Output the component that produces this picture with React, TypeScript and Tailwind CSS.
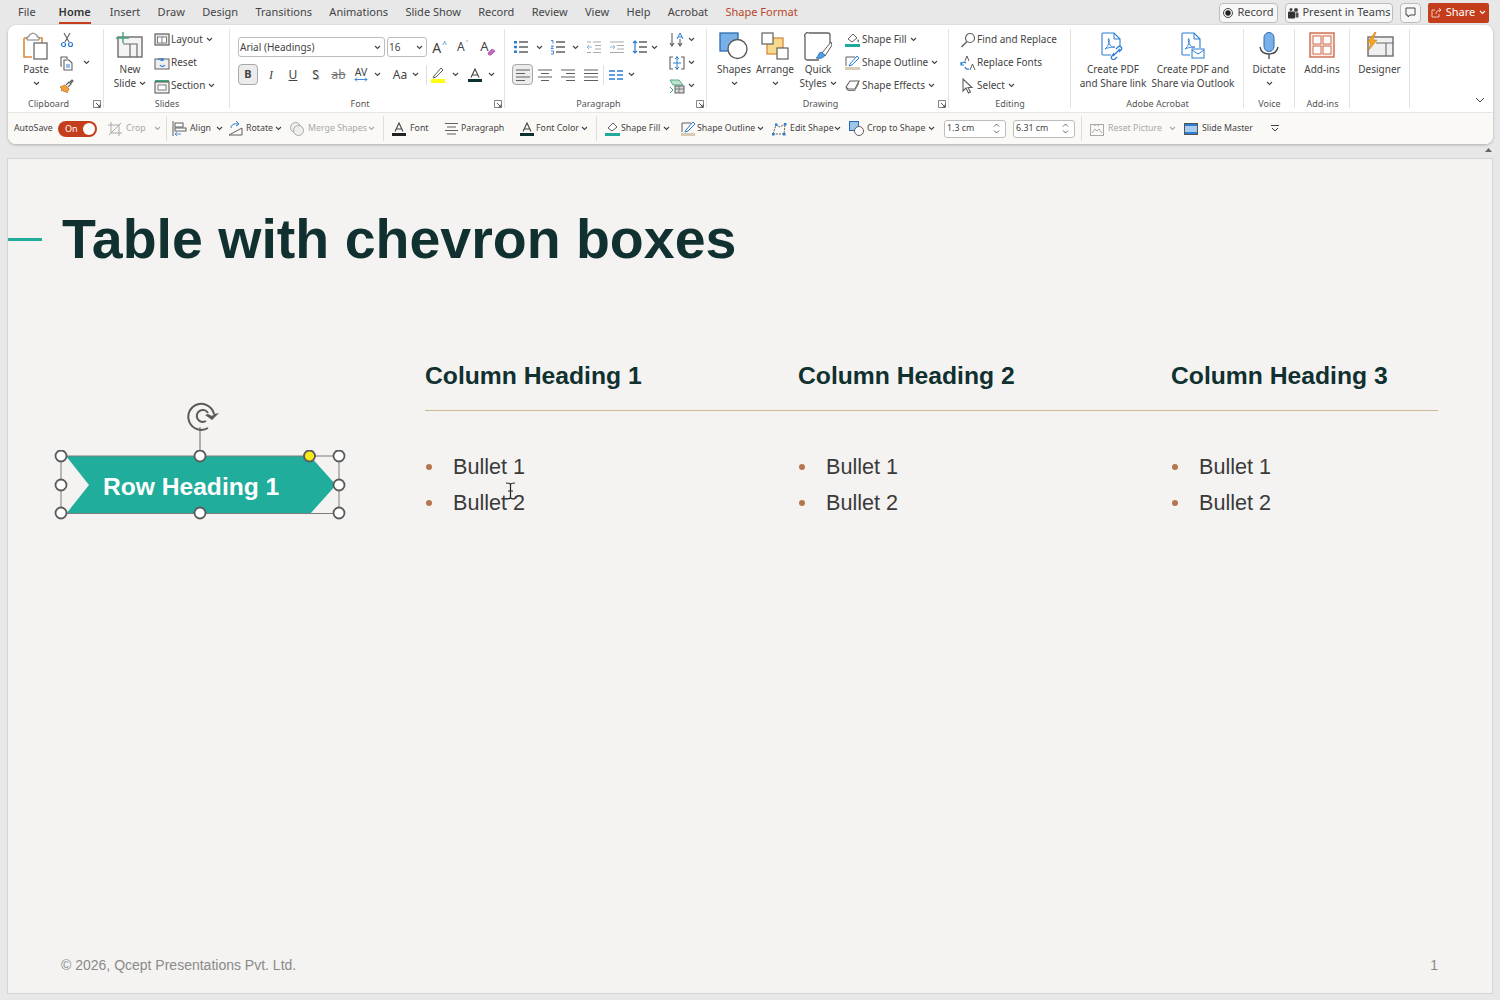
import type { ReactNode } from 'react';

const BLUE = '#2b7cd3';
const GREY = '#5f5f5f';
const TEAL = '#1fa99b';

function Svg({ w = 16, h = 16, children }: { w?: number; h?: number; children: ReactNode }) {
  return (
    <svg width={w} height={h} viewBox={`0 0 ${w} ${h}`} fill="none" className="block flex-none">
      {children}
    </svg>
  );
}

function Chev({ color = '#444' }: { color?: string }) {
  return (
    <svg width="7" height="5" viewBox="0 0 7 5" fill="none" className="block flex-none">
      <path d="M1 1l2.5 2.5L6 1" stroke={color} strokeWidth="1.1" />
    </svg>
  );
}

// ribbon icons
const Icons = {
  paste: (
    <Svg w={28} h={28}>
      <path d="M2 6h4M16 6h4v6M2 6v19h8" stroke="#d98a3d" strokeWidth="1.6" />
      <path d="M7 5V3l4-2 4 2v2h2v3H5V5z" fill="#fff" stroke="#7a7a7a" />
      <rect x="12" y="11" width="13" height="16" fill="#fff" stroke="#6a6a6a" strokeWidth="1.3" />
    </Svg>
  ),
  cut: (
    <Svg>
      <path d="M5 1l5 9M11 1l-5 9" stroke={GREY} strokeWidth="1.1" />
      <circle cx="4.5" cy="12.5" r="2" stroke={BLUE} strokeWidth="1.2" />
      <circle cx="11.5" cy="12.5" r="2" stroke={BLUE} strokeWidth="1.2" />
    </Svg>
  ),
  copy: (
    <Svg>
      <path d="M3 11H2V2h6v2" stroke={GREY} strokeWidth="1.1" />
      <path d="M5 5h5l3 3v7H5z" fill="#fff" stroke={GREY} strokeWidth="1.1" />
      <path d="M7 10h4M7 12h4" stroke={BLUE} />
    </Svg>
  ),
  painter: (
    <Svg>
      <path d="M1 9l5-2 4 4-2 4-2-2-1 1-1-2-2 1 1-2z" fill="#f0a040" stroke="#c87a20" strokeWidth=".8" />
      <path d="M7 7l3-3 2 2-3 3M11 4l2-2 1 1-2 2" stroke={GREY} strokeWidth="1.2" />
    </Svg>
  ),
  newSlide: (
    <Svg w={28} h={26}>
      <rect x="2" y="5" width="24" height="20" fill="#f4f4f4" stroke="#6b6b6b" strokeWidth="1.4" />
      <path d="M7 12h14v13M14 12v13" stroke="#6b6b6b" strokeWidth="1.2" />
      <path d="M7 0v11M0 6h13" stroke="#3fa77a" strokeWidth="1.4" />
    </Svg>
  ),
  layout: (
    <Svg>
      <rect x="1" y="2" width="14" height="11" fill="#e8e8e8" stroke={GREY} strokeWidth="1.2" />
      <rect x="3.5" y="5" width="9" height="6" fill="#fff" stroke={GREY} strokeWidth=".8" />
      <path d="M8 5v6" stroke={GREY} strokeWidth=".8" />
    </Svg>
  ),
  reset: (
    <Svg>
      <rect x="1" y="4" width="14" height="10" fill="#eee" stroke={GREY} />
      <path d="M4 5a3 3 0 015 0M9 3v2.500H6.500" stroke={BLUE} strokeWidth="1.1" />
      <path d="M11 10a3 3 0 01-5 0" stroke={BLUE} strokeWidth="1.1" />
    </Svg>
  ),
  section: (
    <Svg>
      <path d="M1 2h14v2H1z" fill="#3fa77a" />
      <rect x="1" y="4" width="14" height="11" fill="#f2f2f2" stroke={GREY} strokeWidth="1.1" />
      <rect x="4" y="7" width="8" height="5" fill="#fff" stroke={GREY} strokeWidth=".8" />
    </Svg>
  ),
  eraser: (
    <Svg w={9} h={8}>
      <path d="M1 5l4-4 3 2-4 4H2z" fill="#c76bc7" stroke="#9a3f9a" strokeWidth=".7" />
    </Svg>
  ),
  pen: (
    <Svg w={16} h={18}>
      <path d="M4 10l7-8 2 2-7 7-3 1z" stroke={GREY} strokeWidth="1" />
      <rect x="1" y="13" width="14" height="4" fill="#ffff14" />
    </Svg>
  ),
  bullets: (
    <Svg>
      <path d="M6 3h9M6 8h9M6 13h9" stroke={GREY} strokeWidth="1.3" />
      <path d="M1 2h3v2.500H1zM1 6.800h3v2.500H1zM1 11.500h3V14H1z" fill={BLUE} />
    </Svg>
  ),
  numbered: (
    <Svg>
      <path d="M6 3h9M6 8h9M6 13h9" stroke={GREY} strokeWidth="1.3" />
      <path d="M1 1.500h2v3M1 7h2.500L1 9.500h2.500M1 12h2.500v3H1" stroke={BLUE} strokeWidth=".9" />
    </Svg>
  ),
  indentLess: (
    <Svg>
      <path d="M7 3h8M9 6.500h6M9 10h6M7 13.500h8M1 3h4M1 13.500h4" stroke="#aaa" strokeWidth="1.2" />
      <path d="M6 8H1m2-2L1 8l2 2" stroke="#8fb8de" strokeWidth="1" />
    </Svg>
  ),
  indentMore: (
    <Svg>
      <path d="M1 3h14M8 6.500h7M8 10h7M1 13.500h14" stroke="#aaa" strokeWidth="1.2" />
      <path d="M1 8h5M4 6l2 2-2 2" stroke="#8fb8de" strokeWidth="1" />
    </Svg>
  ),
  lineSpacing: (
    <Svg>
      <path d="M7 3h8M7 8h8M7 13h8" stroke={GREY} strokeWidth="1.4" />
      <path d="M3 2v12M1 4l2-2 2 2M1 12l2 2 2-2" stroke={BLUE} strokeWidth="1.2" />
    </Svg>
  ),
  textDir: (
    <Svg>
      <path d="M3 1v13M1 11l2 3 2-3M11 7v7M9 11l2 3 2-3" stroke={GREY} strokeWidth="1.1" />
      <path d="M8 7l3-6 3 6M9 5h4" stroke={BLUE} strokeWidth="1" />
    </Svg>
  ),
  alignText: (
    <Svg>
      <path d="M4 2H1v12h3M12 2h3v12h-3" stroke={GREY} strokeWidth="1.1" />
      <path d="M8 1v14M6 4l2-2 2 2M6 12l2 2 2-2M4 8h8" stroke={BLUE} strokeWidth="1" />
    </Svg>
  ),
  smartArt: (
    <Svg>
      <path d="M1 2h9l4 5H4z" fill="#bfe3cf" stroke="#3fa77a" strokeWidth=".9" />
      <path d="M1 9l3 3-3 3" stroke="#3fa77a" />
      <rect x="6" y="8" width="9" height="7" fill="#d8d8d8" stroke={GREY} />
      <path d="M6 11h9M10 8v7" stroke={GREY} strokeWidth=".7" />
    </Svg>
  ),
  columns: (
    <Svg>
      <path d="M1 4h6M1 8h6M1 12h6M9 4h6M9 8h6M9 12h6" stroke={BLUE} strokeWidth="1.3" />
    </Svg>
  ),
  shapes: (
    <Svg w={30} h={28}>
      <rect x="1" y="1" width="18" height="18" fill="#79b0e8" stroke="#2b6cb0" strokeWidth="1.3" />
      <circle cx="18.500" cy="17" r="9.500" fill="#fff" stroke="#5b5b5b" strokeWidth="1.4" />
    </Svg>
  ),
  arrange: (
    <Svg w={28} h={28}>
      <rect x="6" y="6" width="16" height="16" fill="#f9d98b" stroke="#d98a3d" strokeWidth="1.3" />
      <rect x="1" y="1" width="11" height="11" fill="#fff" stroke="#5f5f5f" strokeWidth="1.2" />
      <rect x="16" y="16" width="11" height="11" fill="#fff" stroke="#5f5f5f" strokeWidth="1.2" />
    </Svg>
  ),
  quick: (
    <Svg w={28} h={30}>
      <path d="M5 1h19a2 2 0 012 2v12M15 28H3a2 2 0 01-2-2V5a3 3 0 014-4" stroke="#5f5f5f" strokeWidth="1.3" />
      <path d="M27 10L18 21l3 3 7-11z" fill="#fff" stroke="#5f5f5f" />
      <path d="M17 20c-3 1-2 4-5 6 4 1 8 0 9-3z" fill="#4d9fe0" stroke="#2b6cb0" strokeWidth=".8" />
    </Svg>
  ),
  shapeFill: (
    <Svg>
      <path d="M3 7l5-5 4 4-5 4z" fill="#fff" stroke={GREY} />
      <path d="M13 7c1 1.500 1.500 2.500 .5 3s-1.500-1.500-.5-3z" fill={GREY} />
      <rect x="0" y="12" width="15" height="3" fill={TEAL} />
    </Svg>
  ),
  shapeOutline: (
    <Svg>
      <path d="M1 11V2h9" stroke={GREY} />
      <path d="M5 9l7-8 2 2-7 7-3 1z" fill="#fff" stroke={BLUE} />
      <rect x="0" y="12" width="15" height="3" fill="#d8cdb4" />
    </Svg>
  ),
  shapeEffects: (
    <Svg>
      <path d="M1 9l4-6h9l-4 8H3z" fill="#fff" stroke={GREY} strokeWidth="1.1" />
      <path d="M1 9l2 3h7l4-8v2l-4 7H3L1 11z" fill="#777" />
    </Svg>
  ),
  find: (
    <Svg>
      <circle cx="10" cy="6" r="4.500" stroke={GREY} strokeWidth="1.2" />
      <path d="M7 9.500L1.500 15" stroke={GREY} strokeWidth="1.4" />
    </Svg>
  ),
  replaceFonts: (
    <Svg>
      <path d="M5 6L7 1l2 5M10 15l2.500-6 2.500 6" stroke={GREY} />
      <path d="M6 8a3 3 0 00-5 2M1 7v3h3M5 12a3 3 0 004 2" stroke={BLUE} strokeWidth="1.2" />
    </Svg>
  ),
  select: (
    <Svg>
      <path d="M3 1v12l3-3 2.500 5 2-1L8 9.500h4z" fill="#fff" stroke={GREY} strokeWidth="1.1" />
    </Svg>
  ),
  pdfLink: (
    <Svg w={24} h={28}>
      <path d="M1 2a1 1 0 011-1h11l6 6v8M10 23H2a1 1 0 01-1-1V2" stroke={BLUE} strokeWidth="1.1" />
      <path d="M13 1v6h6" stroke={BLUE} />
      <path d="M4 17c3-2 5-8 4-10s-1 3 1 6 5 2 5 2-6 0-10 2z" stroke={BLUE} strokeWidth=".9" />
      <path d="M12 24l7-7M13 21l-2 3a2 2 0 003 3l2-2M18 20l2-2a2 2 0 00-3-3l-2 2" stroke={BLUE} strokeWidth="1.2" />
    </Svg>
  ),
  pdfMail: (
    <Svg w={24} h={28}>
      <path d="M1 2a1 1 0 011-1h11l6 6v9M9 23H2a1 1 0 01-1-1V2" stroke={BLUE} strokeWidth="1.1" />
      <path d="M13 1v6h6" stroke={BLUE} />
      <path d="M4 17c3-2 5-8 4-10s-1 3 1 6 5 2 5 2-6 0-10 2z" stroke={BLUE} strokeWidth=".9" />
      <rect x="11" y="17" width="12" height="9" fill="#fff" stroke={BLUE} />
      <path d="M11 18l6 4 6-4" stroke={BLUE} />
    </Svg>
  ),
  mic: (
    <Svg w={20} h={28}>
      <rect x="5" y="0.500" width="10" height="19" rx="5" fill="#79b0e8" stroke="#2b6cb0" />
      <path d="M1 15c1 5 4 7 9 7s8-2 9-7M10 22v5" stroke="#444" strokeWidth="1.3" />
    </Svg>
  ),
  addins: (
    <Svg w={26} h={26}>
      <rect x="1" y="1" width="24" height="24" fill="#fbeee9" stroke="#d0694a" strokeWidth="1.4" />
      <rect x="4" y="4" width="8" height="8" fill="#fff" stroke="#d0694a" />
      <rect x="14" y="4" width="8" height="8" fill="#fff" stroke="#d0694a" />
      <rect x="4" y="14" width="8" height="8" fill="#fff" stroke="#d0694a" />
      <rect x="14" y="14" width="8" height="8" fill="#fff" stroke="#d0694a" />
    </Svg>
  ),
  designer: (
    <Svg w={28} h={26}>
      <rect x="2" y="5" width="25" height="19" fill="#f0f0f0" stroke="#6b6b6b" strokeWidth="1.4" />
      <path d="M10 11h17M20 11v13" stroke="#6b6b6b" strokeWidth="1.1" />
      <path d="M9 0L1 11h4l-3 8 9-11H7l3-8z" fill="#f5a623" stroke="#c87a20" strokeWidth=".6" />
    </Svg>
  ),
  launcher: (
    <Svg w={8} h={8}>
      <path d="M.5 7.500v-7h7v7z" stroke="#666" strokeWidth=".8" />
      <path d="M3 3l4 4M7 4.500V7H4.500" stroke="#444" strokeWidth=".9" />
    </Svg>
  ),
};

function FormatLines({ kind }: { kind: 'left' | 'center' | 'right' | 'justify' }) {
  const d = {
    left: 'M1 3h14M1 6.500h9M1 10h14M1 13.500h9',
    center: 'M1 3h14M4 6.500h8M1 10h14M4 13.500h8',
    right: 'M1 3h14M6 6.500h9M1 10h14M6 13.500h9',
    justify: 'M1 3h14M1 6.500h14M1 10h14M1 13.500h14',
  }[kind];
  return (
    <Svg>
      <path d={d} stroke={GREY} strokeWidth="1.2" />
    </Svg>
  );
}

// toolbar icons
const ToolIcons = {
  crop: (
    <Svg w={14} h={14}>
      <path d="M3 0v11h11M0 3h11v11M1 13L13 1" stroke="#aaa" />
    </Svg>
  ),
  align: (
    <Svg w={15} h={15}>
      <path d="M1 0v15" stroke={GREY} />
      <rect x="3" y="2" width="8" height="4" fill="#fff" stroke={GREY} />
      <rect x="3" y="7" width="11" height="3" fill="#fff" stroke={GREY} />
      <path d="M9 13H3m2-2l-2 2 2 2" stroke={BLUE} strokeWidth=".8" />
    </Svg>
  ),
  rotate: (
    <Svg w={15} h={15}>
      <path d="M1 14L14 7v7z" stroke={GREY} />
      <path d="M3 7c0-3 3-5 7-4M8 0l3 3-3 2" stroke={BLUE} />
    </Svg>
  ),
  merge: (
    <Svg w={14} h={14}>
      <circle cx="5.500" cy="5.500" r="5" fill="#eee" stroke="#aaa" />
      <circle cx="8.500" cy="8.500" r="5" fill="#eee" stroke="#aaa" />
    </Svg>
  ),
  font: (
    <Svg w={14} h={14}>
      <path d="M3 9.500L7 1l4 8.500M4.500 7h5" stroke="#444" strokeWidth="1.1" />
      <rect x="0" y="11" width="14" height="3" fill="#222" />
    </Svg>
  ),
  paragraph: (
    <Svg w={13} h={13}>
      <path d="M0 1.500h13M2 5h9M0 8.500h13M2 12h9" stroke={GREY} />
    </Svg>
  ),
  fontColor: (
    <Svg w={14} h={14}>
      <path d="M3 9.500L7 1l4 8.500M4.500 7h5" stroke="#444" strokeWidth="1.1" />
      <rect x="0" y="11" width="14" height="3" fill="#0b3230" />
    </Svg>
  ),
  fill: (
    <Svg w={15} h={15}>
      <path d="M3 7l5-5 4 4-5 4z" fill="#fff" stroke={GREY} />
      <rect x="0" y="12" width="15" height="3" fill={TEAL} />
    </Svg>
  ),
  outline: (
    <Svg w={14} h={15}>
      <path d="M1 11V2h9" stroke={GREY} />
      <path d="M5 9l7-8 2 2-7 7-3 1z" fill="#fff" stroke={BLUE} />
      <rect x="0" y="12" width="14" height="3" fill="#d8cdb4" />
    </Svg>
  ),
  edit: (
    <Svg w={15} h={14}>
      <path d="M1 12L4 3l4 2 5-3-1 10z" stroke={GREY} strokeDasharray="2 1" />
      <path d="M0 11h2.500v2.500H0zM3 1.500h2.500V4H3zM12 1h2.500v2.500H12zM11 11h2.500v2.500H11z" fill={BLUE} />
    </Svg>
  ),
  cropShape: (
    <Svg w={15} h={15}>
      <rect x="0.500" y="0.500" width="9" height="9" fill="#9cc5ee" stroke="#2b6cb0" />
      <circle cx="10" cy="10" r="4.500" fill="#fff" stroke={GREY} />
    </Svg>
  ),
  resetPic: (
    <Svg w={14} h={14}>
      <rect x="0.500" y="2.500" width="13" height="11" stroke="#aaa" />
      <path d="M2 11l3-4 2 2 2-2 3 4M4 4a3 3 0 015 0" stroke="#aaa" />
    </Svg>
  ),
  master: (
    <Svg w={14} h={14}>
      <rect x="0.500" y="1.500" width="13" height="11" fill="#a9cdee" stroke="#555" />
      <rect x="1" y="2" width="12" height="2" fill={BLUE} />
      <rect x="1" y="10" width="12" height="2" fill={BLUE} />
    </Svg>
  ),
};

function Sep() {
  return <div className="h-[25px] w-px flex-none bg-[#dedede]" />;
}

function Group({ label, launcher, className, children }: { label?: string; launcher?: boolean; className: string; children: ReactNode }) {
  return (
    <div className={`relative flex h-[83px] flex-none flex-col ${className}`}>
      <div className="flex h-[69px]">{children}</div>
      <div className={`relative h-[14px] whitespace-nowrap text-center text-[9px] leading-[14px] text-[#555] ${launcher ? 'pr-[15px]' : ''}`}>
        {label}
        {launcher && <div className="absolute right-[3px] top-[3px]">{Icons.launcher}</div>}
      </div>
      <div className="absolute bottom-[3px] right-0 top-[1px] w-px bg-[#e2e2e2]" />
    </div>
  );
}

function BigButton({ icon, lines, chev, className }: { icon: ReactNode; lines: string[]; chev?: boolean; className: string }) {
  const single = lines.length === 1;
  return (
    <div className={`flex flex-none flex-col items-center text-[10px] leading-[14px] text-[#444] ${className}`}>
      <div className="flex h-[34px] flex-none items-start justify-center pt-[4px]">{icon}</div>
      {lines.map((line, i) => (
        <div key={line} className="flex items-center gap-[3px] whitespace-nowrap">
          {line}
          {chev && !single && i === lines.length - 1 && <Chev />}
        </div>
      ))}
      {chev && single && (
        <div className="flex h-[14px] items-center">
          <Chev />
        </div>
      )}
    </div>
  );
}

function Row({ icon, label, chev }: { icon: ReactNode; label: string; chev?: boolean }) {
  return (
    <div className="flex h-[23px] items-center whitespace-nowrap text-[10px] text-[#444]">
      <div className="flex w-[17px] flex-none items-center">{icon}</div>
      {label}
      {chev && (
        <span className="ml-[3px]">
          <Chev />
        </span>
      )}
    </div>
  );
}

function Cell({ className, children }: { className: string; children: ReactNode }) {
  return <div className={`flex h-full flex-none items-center justify-center ${className}`}>{children}</div>;
}

function Tool({ icon, label, chev, dim, tight, className }: { icon: ReactNode; label: string; chev?: boolean; dim?: boolean; tight?: boolean; className: string }) {
  return (
    <div className={`flex flex-none items-center whitespace-nowrap text-[8.800px] ${dim ? 'text-[#a8a8a8]' : 'text-[#444]'} ${className}`}>
      <div className={`flex-none ${tight ? 'w-[16px]' : 'w-[18px]'}`}>{icon}</div>
      {label}
      {chev && (
        <span className="ml-auto">
          <Chev color={dim ? '#aaa' : '#444'} />
        </span>
      )}
    </div>
  );
}

function SizeInput({ value, className }: { value: string; className: string }) {
  return (
    <div className={`flex h-[18px] w-[62px] flex-none items-center justify-between rounded-[3px] border border-[#bdbdbd] bg-white pl-[2px] pr-[5px] text-[8.800px] text-[#444] ${className}`}>
      {value}
      <svg width="7" height="11" viewBox="0 0 7 11" fill="none">
        <path d="M1 3.500L3.500 1 6 3.500M1 7.500L3.500 10 6 7.500" stroke="#555" strokeWidth=".9" />
      </svg>
    </div>
  );
}

function TitleBar() {
  const tabs = ['Insert', 'Draw', 'Design', 'Transitions', 'Animations', 'Slide Show', 'Record', 'Review', 'View', 'Help', 'Acrobat'];
  return (
    <div className="flex h-[25px] flex-none items-center pl-[18px] pr-[11px] text-[11px] text-[#444]">
      <span>File</span>
      <div className="relative ml-[23px] font-semibold text-[#333]">
        Home
        <div className="absolute -bottom-[3px] left-0 right-0 h-[2px] bg-[#c43e1c]" />
      </div>
      <div className="ml-[19px] flex gap-[17.400px]">
        {tabs.map((t) => (
          <span key={t}>{t}</span>
        ))}
        <span className="text-[#b7472a]">Shape Format</span>
      </div>
      <div className="ml-auto flex items-center whitespace-nowrap">
        <div className="flex h-[20px] w-[59px] items-center justify-center gap-[4px] rounded-[4px] border border-[#bcbcbc] bg-[#f7f7f7]">
          <svg width="10" height="10" viewBox="0 0 10 10">
            <circle cx="5" cy="5" r="4.500" fill="none" stroke="#333" strokeWidth=".9" />
            <circle cx="5" cy="5" r="2.700" fill="#222" />
          </svg>
          Record
        </div>
        <div className="ml-[7px] flex h-[20px] w-[108px] items-center justify-center gap-[3px] rounded-[4px] border border-[#bcbcbc] bg-[#f7f7f7]">
          <svg width="12" height="12" viewBox="0 0 12 12">
            <circle cx="9" cy="3" r="2" fill="#444" />
            <circle cx="4" cy="2.500" r="1.500" fill="#444" />
            <rect x="1" y="4.500" width="7" height="7" rx="1" fill="#333" />
            <rect x="8.500" y="5.500" width="3" height="5" fill="#555" />
          </svg>
          Present in Teams
        </div>
        <div className="ml-[7px] flex h-[20px] w-[21px] items-center justify-center rounded-[4px] border border-[#bcbcbc] bg-[#f7f7f7]">
          <svg width="11" height="11" viewBox="0 0 11 11" fill="none">
            <path d="M1 1h9v7H5L3 10V8H1z" stroke="#333" strokeWidth=".9" />
          </svg>
        </div>
        <div className="ml-[7px] flex h-[20px] w-[61px] items-center justify-center gap-[4px] rounded-[2px] bg-[#c43e1c] text-white">
          <svg width="11" height="11" viewBox="0 0 11 11" fill="none">
            <path d="M4 3H1v7h7V7M5 7c0-3 2-4 5-4M8 1l2 2-2 2" stroke="#f5d7cd" strokeWidth=".9" />
          </svg>
          Share
          <Chev color="#fff" />
        </div>
      </div>
    </div>
  );
}

function Ribbon() {
  return (
    <div className="relative flex h-[87px] flex-none pt-[3px]">
      <Group label="Clipboard" launcher className="w-[96px]">
        <BigButton icon={Icons.paste} lines={['Paste']} chev className="ml-[10px] w-[36px]" />
        <div className="ml-[4px] flex flex-col">
          <div className="flex h-[23px] w-[18px] items-center justify-center">{Icons.cut}</div>
          <div className="flex h-[23px] items-center">
            <div className="flex w-[18px] justify-center">{Icons.copy}</div>
            <span className="ml-[7px]">
              <Chev />
            </span>
          </div>
          <div className="flex h-[23px] w-[18px] items-center justify-center">{Icons.painter}</div>
        </div>
      </Group>

      <Group label="Slides" className="w-[126px]">
        <BigButton icon={Icons.newSlide} lines={['New', 'Slide']} chev className="ml-[8px] w-[36px]" />
        <div className="ml-[6px] flex flex-col">
          <Row icon={Icons.layout} label="Layout" chev />
          <Row icon={Icons.reset} label="Reset" />
          <Row icon={Icons.section} label="Section" chev />
        </div>
      </Group>

      <Group label="Font" launcher className="w-[275px]">
        <div className="flex flex-col pl-[8px] pt-[9px]">
          <div className="flex h-[20px] items-center text-[10px] text-[#444]">
            <div className="flex h-[20px] w-[147px] items-center justify-between rounded-[3px] border border-[#bdbdbd] pl-[1px] pr-[3px]">
              Arial (Headings)
              <Chev />
            </div>
            <div className="ml-[2px] flex h-[20px] w-[40px] items-center justify-between rounded-[3px] border border-[#bdbdbd] pl-[1px] pr-[3px]">
              16
              <Chev />
            </div>
            <Cell className="ml-[1px] w-[23px] gap-px text-[14px]">
              A<span className="-mt-[6px] text-[8px] text-[#2b7cd3]">^</span>
            </Cell>
            <Cell className="w-[23px] gap-px text-[12px]">
              A<span className="-mt-[6px] text-[8px] text-[#2b7cd3]">˅</span>
            </Cell>
            <Cell className="relative ml-[1px] w-[24px] text-[13px]">
              <span className="-ml-[5px]">A</span>
              <div className="absolute bottom-[1px] left-[12px]">{Icons.eraser}</div>
            </Cell>
          </div>
          <div className="mt-[7px] flex h-[21px] items-center text-[12px] text-[#444]">
            <div className="flex h-[21px] w-[20px] flex-none items-center justify-center rounded-[4px] border border-[#a8a8a8] bg-[#ececec] text-[11px] font-bold">B</div>
            <Cell className="ml-[2px] w-[22px] font-['Liberation_Serif',serif] italic">I</Cell>
            <Cell className="w-[22px] underline">U</Cell>
            <Cell className="w-[23px] [text-shadow:1px_1px_0_#bbb]">S</Cell>
            <Cell className="w-[23px] text-[#777] line-through">ab</Cell>
            <Cell className="w-[22px] flex-col text-[10.500px] leading-[10px]">
              AV
              <svg width="14" height="5" viewBox="0 0 14 5" fill="none" className="block">
                <path d="M1 2.500h12M3 .5L1 2.500l2 2M11 .5l2 2-2 2" stroke={BLUE} strokeWidth=".9" />
              </svg>
            </Cell>
            <Cell className="w-[10px]"><Chev /></Cell>
            <Cell className="ml-[8px] w-[20px]">Aa</Cell>
            <Cell className="w-[10px]"><Chev /></Cell>
            <div className="ml-[6px] h-[20px] w-px flex-none bg-[#dedede]" />
            <Cell className="ml-[2px] w-[18px]">{Icons.pen}</Cell>
            <Cell className="ml-[2px] w-[12px]"><Chev /></Cell>
            <Cell className="ml-[4px] w-[20px]">{ToolIcons.fontColor}</Cell>
            <Cell className="w-[12px]"><Chev /></Cell>
          </div>
        </div>
      </Group>

      <Group label="Paragraph" launcher className="w-[202px]">
        <div className="flex w-[160px] flex-none flex-col pt-[9px]">
          <div className="flex h-[20px] items-center">
            <Cell className="ml-[7px] w-[18px]">{Icons.bullets}</Cell>
            <Cell className="ml-[3px] w-[12px]"><Chev /></Cell>
            <Cell className="ml-[4px] w-[18px]">{Icons.numbered}</Cell>
            <Cell className="ml-[2px] w-[12px]"><Chev /></Cell>
            <Cell className="ml-[4px] w-[18px]">{Icons.indentLess}</Cell>
            <Cell className="ml-[5px] w-[18px]">{Icons.indentMore}</Cell>
            <Cell className="ml-[5px] w-[18px]">{Icons.lineSpacing}</Cell>
            <Cell className="w-[11px]"><Chev /></Cell>
          </div>
          <div className="mt-[7px] flex h-[21px] items-center">
            <div className="ml-[7px] flex h-[21px] w-[21px] flex-none items-center justify-center rounded-[4px] border border-[#a8a8a8] bg-[#ececec]">
              <FormatLines kind="left" />
            </div>
            <Cell className="ml-[3px] w-[18px]"><FormatLines kind="center" /></Cell>
            <Cell className="ml-[5px] w-[18px]"><FormatLines kind="right" /></Cell>
            <Cell className="ml-[5px] w-[18px]"><FormatLines kind="justify" /></Cell>
            <div className="ml-[3px] h-[20px] w-px flex-none bg-[#dedede]" />
            <Cell className="ml-[3px] w-[18px]">{Icons.columns}</Cell>
            <Cell className="w-[12px]"><Chev /></Cell>
          </div>
        </div>
        <div className="ml-[3px] flex flex-col">
          {[Icons.textDir, Icons.alignText, Icons.smartArt].map((icon, i) => (
            <div key={i} className="flex h-[23px] items-center">
              <div className="flex w-[18px] justify-center">{icon}</div>
              <span className="ml-[2px]">
                <Chev />
              </span>
            </div>
          ))}
        </div>
      </Group>

      <Group label="Drawing" launcher className="w-[242px]">
        <BigButton icon={Icons.shapes} lines={['Shapes']} chev className="ml-[8px] w-[38px]" />
        <BigButton icon={Icons.arrange} lines={['Arrange']} chev className="w-[44px]" />
        <BigButton icon={Icons.quick} lines={['Quick', 'Styles']} chev className="w-[42px]" />
        <div className="ml-[6px] flex flex-col">
          <Row icon={Icons.shapeFill} label="Shape Fill" chev />
          <Row icon={Icons.shapeOutline} label="Shape Outline" chev />
          <Row icon={Icons.shapeEffects} label="Shape Effects" chev />
        </div>
      </Group>

      <Group label="Editing" className="w-[122px]">
        <div className="ml-[11px] flex flex-col">
          <Row icon={Icons.find} label="Find and Replace" />
          <Row icon={Icons.replaceFonts} label="Replace Fonts" />
          <Row icon={Icons.select} label="Select" chev />
        </div>
      </Group>

      <Group label="Adobe Acrobat" className="w-[173px]">
        <BigButton icon={Icons.pdfLink} lines={['Create PDF', 'and Share link']} className="ml-[7px] w-[70px]" />
        <BigButton icon={Icons.pdfMail} lines={['Create PDF and', 'Share via Outlook']} className="w-[90px]" />
      </Group>

      <Group label="Voice" className="w-[51px]">
        <BigButton icon={Icons.mic} lines={['Dictate']} chev className="w-[50px]" />
      </Group>

      <Group label="Add-ins" className="w-[55px]">
        <BigButton icon={Icons.addins} lines={['Add-ins']} className="w-[54px]" />
      </Group>

      <Group className="w-[60px]">
        <BigButton icon={Icons.designer} lines={['Designer']} className="w-[59px]" />
      </Group>

      <div className="absolute right-[8px] top-[72px]">
        <svg width="10" height="6" viewBox="0 0 10 6" fill="none">
          <path d="M1 1l4 4 4-4" stroke="#444" />
        </svg>
      </div>
    </div>
  );
}

function ShapeToolbar() {
  return (
    <div className="flex h-[32px] flex-none items-center rounded-b-[8px] border-t border-[#e6e6e6] bg-[#fbf9f6] pl-[6px]">
      <span className="w-[39px] flex-none text-[8.800px] text-[#444]">AutoSave</span>
      <div className="ml-[5px] flex h-[16px] w-[39px] flex-none items-center justify-between rounded-full bg-[#c43e1c] pl-[7px] pr-[2px] text-[9px] text-white">
        On
        <div className="size-[12px] rounded-full bg-white" />
      </div>
      <Tool icon={ToolIcons.crop} label="Crop" chev dim className="ml-[11px] w-[53px]" />
      <div className="ml-[5px]"><Sep /></div>
      <Tool icon={ToolIcons.align} label="Align" chev className="ml-[5px] w-[51px]" />
      <Tool icon={ToolIcons.rotate} label="Rotate" chev className="ml-[5px] w-[54px]" />
      <Tool icon={ToolIcons.merge} label="Merge Shapes" chev dim className="ml-[8px] w-[85px]" />
      <div className="ml-[8px]"><Sep /></div>
      <Tool icon={ToolIcons.font} label="Font" className="ml-[8px] w-[36px]" />
      <Tool icon={ToolIcons.paragraph} label="Paragraph" tight className="ml-[17px] w-[59px]" />
      <Tool icon={ToolIcons.fontColor} label="Font Color" tight className="ml-[16px] w-[68px]" chev />
      <div className="ml-[8px]"><Sep /></div>
      <Tool icon={ToolIcons.fill} label="Shape Fill" tight className="ml-[8px] w-[65px]" chev />
      <Tool icon={ToolIcons.outline} label="Shape Outline" tight className="ml-[11px] w-[83px]" chev />
      <Tool icon={ToolIcons.edit} label="Edit Shape" chev className="ml-[8px] w-[69px]" />
      <Tool icon={ToolIcons.cropShape} label="Crop to Shape" chev className="ml-[8px] w-[86px]" />
      <SizeInput value="1.3 cm" className="ml-[9px]" />
      <SizeInput value="6.31 cm" className="ml-[7px]" />
      <div className="ml-[6px]"><Sep /></div>
      <Tool icon={ToolIcons.resetPic} label="Reset Picture" chev dim className="ml-[8px] w-[86px]" />
      <Tool icon={ToolIcons.master} label="Slide Master" className="ml-[8px] w-[68px]" />
      <svg width="8" height="7" viewBox="0 0 8 7" fill="none" className="ml-[19px]">
        <path d="M0 .5h8M1 3l3 3 3-3" stroke="#444" />
      </svg>
    </div>
  );
}

function RowHeading() {
  return (
    <div className="relative flex h-[58px] w-[278px] items-center pl-[42px] pt-[5px]">
      <svg width="300" height="125" viewBox="0 0 300 125" fill="none" className="absolute -top-[55px] -left-[10px]">
        <path d="M15 55h244l26 29-26 29H15l23-29z" fill="#20ad9c" />
        <rect x="10" y="55" width="278" height="57.500" stroke="#7d7d7d" strokeWidth="1" />
        <path d="M149 26v29" stroke="#7d7d7d" strokeWidth="1.2" />
        <path d="M163 13a13 13 0 10-6 14" stroke="#5a5a5a" strokeWidth="2" />
        <path d="M157 12a6 6 0 10-2 8" stroke="#5a5a5a" strokeWidth="2" />
        <path d="M154 14l7 5 7-7-5 1-2 2-4-2z" fill="#5a5a5a" />
      </svg>
      <span className="relative whitespace-nowrap font-['Liberation_Sans',sans-serif] text-[24.600px] font-bold text-white">Row Heading 1</span>
      <svg width="300" height="70" viewBox="0 0 300 70" fill="none" className="absolute -top-[6px] -left-[10px]">
        {[
          [10, 6],
          [149, 6],
          [288, 6],
          [10, 35],
          [288, 35],
          [10, 63],
          [149, 63],
          [288, 63],
        ].map(([cx, cy]) => (
          <circle key={`${cx}-${cy}`} cx={cx} cy={cy} r="5.500" fill="#fff" stroke="#5a5a5a" strokeWidth="1.800" />
        ))}
        <circle cx="258.500" cy="6" r="5.500" fill="#f7ea1a" stroke="#5a5a5a" strokeWidth="1.800" />
      </svg>
    </div>
  );
}

function Column({ title, cursor }: { title: string; cursor?: boolean }) {
  return (
    <div className="relative">
      <div className="h-[50px] whitespace-nowrap text-[24.700px] font-bold leading-[30px] text-[#10312f]">{title}</div>
      <ul className="relative pt-[38px]">
        {['Bullet 1', 'Bullet 2'].map((b) => (
          <li key={b} className="flex h-[36px] items-center text-[21.600px] text-[#3a3a3a]">
            <span className="ml-[1px] size-[6px] rounded-full bg-[#b5764f]" />
            <span className="ml-[21px]">{b}</span>
          </li>
        ))}
        {cursor && (
          <svg width="11" height="18" viewBox="0 0 11 18" fill="none" className="absolute left-[80px] top-[71px]">
            <path d="M1 1c2 0 4 0 4.500 1.500C6 1 8 1 10 1M5.500 2.500v13M1 17c2 0 4 0 4.500-1.500C6 17 8 17 10 17M3 9h5" stroke="#222" strokeWidth="1.200" />
          </svg>
        )}
      </ul>
    </div>
  );
}

function Slide() {
  return (
    <div className="flex h-[836px] flex-col border border-[#d4d4d4] bg-[#f4f3f1] font-['Liberation_Sans',sans-serif]">
      <div className="mt-[53px] flex items-center">
        <div className="h-[3px] w-[34px] bg-[#20ad9c]" />
        <h1 className="ml-[20px] whitespace-nowrap text-[55.500px] font-bold leading-[55px] text-[#10312f]">Table with chevron boxes</h1>
      </div>
      <div className="ml-[53px] mr-[54px] mt-[94px] flex">
        <div className="w-[364px] flex-none pt-[95px]">
          <RowHeading />
        </div>
        <div className="relative grid flex-1 grid-cols-[373px_373px_1fr]">
          <Column title="Column Heading 1" cursor />
          <Column title="Column Heading 2" />
          <Column title="Column Heading 3" />
          <div className="absolute left-0 right-0 top-[49px] h-px bg-[#cbb994]" />
        </div>
      </div>
      <div className="ml-[53px] mr-[54px] mt-auto flex justify-between pb-[18px] text-[14px] leading-[20px] text-[#8a8a8a]">
        <span>© 2026, Qcept Presentations Pvt. Ltd.</span>
        <span>1</span>
      </div>
    </div>
  );
}

export default function App() {
  return (
    <div className="flex h-[1000px] w-[1500px] flex-col overflow-hidden bg-[#e8e8e8] font-['Noto_Sans',sans-serif]">
      <TitleBar />
      <div className="mx-[8px] flex h-[119px] w-[1485px] flex-none flex-col rounded-[8px] bg-white shadow-[0_1px_3px_rgba(0,0,0,0.25)]">
        <Ribbon />
        <ShapeToolbar />
      </div>
      <div className="relative mx-[7px] mt-[14px]">
        <svg width="7" height="4" viewBox="0 0 7 4" className="absolute -top-[10px] right-[1px]">
          <path d="M0 4l3.500-4L7 4z" fill="#666" />
        </svg>
        <Slide />
      </div>
    </div>
  );
}
